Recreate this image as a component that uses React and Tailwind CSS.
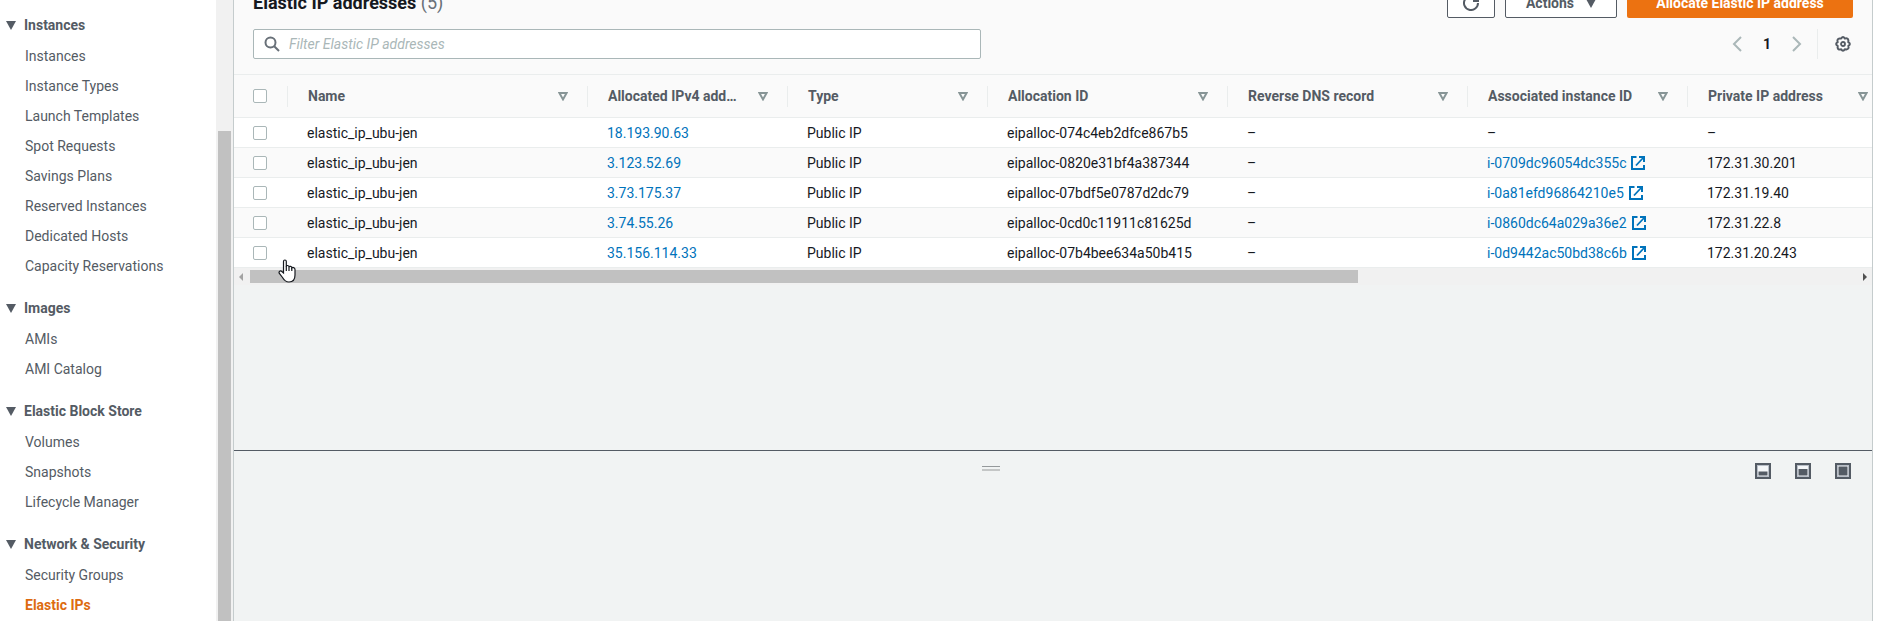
const NAV = [
  { title: 'Instances', items: ['Instances', 'Instance Types', 'Launch Templates', 'Spot Requests', 'Savings Plans', 'Reserved Instances', 'Dedicated Hosts', 'Capacity Reservations'] },
  { title: 'Images', items: ['AMIs', 'AMI Catalog'] },
  { title: 'Elastic Block Store', items: ['Volumes', 'Snapshots', 'Lifecycle Manager'] },
  { title: 'Network & Security', items: ['Security Groups', 'Elastic IPs'] },
];

const COLUMNS = ['Name', 'Allocated IPv4 add…', 'Type', 'Allocation ID', 'Reverse DNS record', 'Associated instance ID', 'Private IP address'];

const ROWS = [
  { ip: '18.193.90.63', id: 'eipalloc-074c4eb2dfce867b5', instance: null, privateIp: '–' },
  { ip: '3.123.52.69', id: 'eipalloc-0820e31bf4a387344', instance: 'i-0709dc96054dc355c', privateIp: '172.31.30.201' },
  { ip: '3.73.175.37', id: 'eipalloc-07bdf5e0787d2dc79', instance: 'i-0a81efd96864210e5', privateIp: '172.31.19.40' },
  { ip: '3.74.55.26', id: 'eipalloc-0cd0c11911c81625d', instance: 'i-0860dc64a029a36e2', privateIp: '172.31.22.8' },
  { ip: '35.156.114.33', id: 'eipalloc-07b4bee634a50b415', instance: 'i-0d9442ac50bd38c6b', privateIp: '172.31.20.243' },
];

function SolidCaret({ className }) {
  return (
    <svg className={className} viewBox="0 0 10 9" aria-hidden="true">
      <path d="M0 0H10L5 9Z" fill="currentColor" />
    </svg>
  );
}

function SortIcon() {
  return (
    <svg className="h-[9px] w-[10px] shrink-0" viewBox="0 0 10 9" aria-hidden="true">
      <path d="M1.4 1H8.6L5 7.4Z" fill="none" stroke="#879596" strokeWidth="2" />
    </svg>
  );
}

function ExternalIcon() {
  return (
    <svg className="size-[14px] shrink-0" viewBox="0 0 14 14" fill="none" stroke="currentColor" strokeWidth="2" aria-hidden="true">
      <path d="M5.5 1H1V13H13V9" />
      <path d="M12 2L5 9.5" strokeWidth="1.8" />
      <path d="M8 0H14V6H12V2H8Z" fill="currentColor" stroke="none" />
    </svg>
  );
}

function PanelIcon({ top }) {
  return (
    <svg className="size-4" viewBox="0 0 16 16" aria-hidden="true">
      <rect x="1" y="1" width="14" height="14" fill="#f4f6f8" stroke="#545b64" strokeWidth="2" />
      <rect x="2.5" y="2.5" width="11" height="11" fill="none" stroke="#b9bfc8" strokeWidth="1" />
      <rect x="3.5" y={top} width="9" height={12.5 - top} fill="#545b64" />
    </svg>
  );
}

function Checkbox({ label }) {
  return (
    <input
      type="checkbox"
      aria-label={label}
      className="block size-[14px] appearance-none rounded-xs border border-[#aab7b8] bg-white"
    />
  );
}

function Sidebar() {
  return (
    <nav aria-label="EC2" className="flex h-full w-[233px] shrink-0 overflow-hidden bg-white text-[#545b64]">
      <div className="flex flex-1 flex-col gap-3 pt-[10px]">
        {NAV.map((section) => (
          <section key={section.title}>
            <button type="button" className="flex h-[30px] items-center gap-2 pl-[6px] font-bold">
              <SolidCaret className="h-[9px] w-[10px]" />
              {section.title}
            </button>
            <ul className="pt-px">
              {section.items.map((item) => (
                <li key={item} className="flex h-[30px] items-center pl-[25px]">
                  <a href="#" className={item === 'Elastic IPs' ? 'font-bold text-[#dd6b10]' : ''}>{item}</a>
                </li>
              ))}
            </ul>
          </section>
        ))}
      </div>
      <div className="w-[17px] bg-[#f1f1f1] px-[2px] pt-[131px]">
        <div className="h-full bg-[#c1c1c1]" />
      </div>
    </nav>
  );
}

function Toolbar() {
  return (
    <header className="bg-[#fafafa] pr-[19px] pl-[19px]">
      <div className="flex h-[18px] items-end justify-between overflow-hidden">
        <h1 className="text-lg leading-[30px] font-bold text-[#16191f]">
          Elastic IP addresses <span className="font-normal text-[#687078]">(5)</span>
        </h1>
        <div className="flex shrink-0 gap-[10px] font-bold text-[#545b64]">
          <button type="button" aria-label="Refresh" className="flex h-[30px] w-12 items-center justify-center rounded-xs border border-[#545b64] bg-white">
            <svg className="size-4" viewBox="0 0 16 16" fill="none" stroke="currentColor" strokeWidth="2" aria-hidden="true">
              <path d="M15 8A7 7 0 1 1 13 3.1" />
              <path d="M15 1V6H10" />
            </svg>
          </button>
          <button type="button" className="flex h-[30px] w-28 items-center justify-center gap-3 rounded-xs border border-[#545b64] bg-white">
            Actions
            <SolidCaret className="h-[9px] w-[10px]" />
          </button>
          <button type="button" className="h-[30px] w-[226px] rounded-xs bg-[#ec7211] text-white">Allocate Elastic IP address</button>
        </div>
      </div>
      <div className="flex items-center justify-between pt-[11px] pb-[15px]">
        <label className="flex h-[30px] w-[728px] items-center gap-[9px] rounded-xs border border-[#aab7b8] bg-white pl-[10px]">
          <svg className="size-4 text-[#687078]" viewBox="0 0 16 16" fill="none" stroke="currentColor" strokeWidth="2" aria-hidden="true">
            <circle cx="6.5" cy="6.5" r="5" />
            <path d="M10.2 10.2L15 15" />
          </svg>
          <input type="search" aria-label="Filter Elastic IP addresses" placeholder="Filter Elastic IP addresses" className="min-w-0 flex-1 outline-none placeholder:text-[#aab7b8] placeholder:italic" />
        </label>
        <div className="flex items-center">
          <button type="button" aria-label="Previous page" className="px-[10px] text-[#aab7b8]">
            <svg className="h-4 w-[10px]" viewBox="0 0 10 16" fill="none" stroke="currentColor" strokeWidth="2" aria-hidden="true"><path d="M9 1L2 8L9 15" /></svg>
          </button>
          <button type="button" className="w-[30px] text-center font-bold text-[#16191f]">1</button>
          <button type="button" aria-label="Next page" className="px-[10px] text-[#aab7b8]">
            <svg className="h-4 w-[10px]" viewBox="0 0 10 16" fill="none" stroke="currentColor" strokeWidth="2" aria-hidden="true"><path d="M1 1L8 8L1 15" /></svg>
          </button>
          <div className="ml-[5px] flex h-[30px] items-center border-l border-[#eaeded] pr-[2px] pl-[17px]">
            <button type="button" aria-label="Preferences" className="text-[#545b64]">
              <svg className="size-4" viewBox="0 0 16 16" fill="none" stroke="currentColor" aria-hidden="true">
                <path strokeWidth="2" strokeLinejoin="round" d="M6.2 2.6Q8 -.4 9.800 2.600Q13.200 1.600 13.400 4.600L13.300 6.200Q16.400 8 13.300 9.800Q14.400 13.200 11.400 13.400L9.800 13.300Q8 16.400 6.200 13.300Q2.800 14.400 2.600 11.400L2.700 9.800Q-.4 8 2.700 6.200Q1.600 2.800 4.600 2.600Z" />
                <circle cx="8" cy="8" r="2" strokeWidth="1.8" />
              </svg>
            </button>
          </div>
        </div>
      </div>
    </header>
  );
}

function AddressTable() {
  return (
    <div className="overflow-hidden">
      <table className="w-full min-w-[1654px] table-fixed border-collapse text-left whitespace-nowrap">
        <colgroup>
          <col className="w-[54px]" />
          <col className="w-[300px]" />
          <col className="w-[200px]" />
          <col className="w-[200px]" />
          <col className="w-[240px]" />
          <col className="w-[240px]" />
          <col className="w-[220px]" />
          <col className="w-[200px]" />
        </colgroup>
        <thead>
          <tr className="h-[43px] border-y border-[#eaeded] bg-[#fafafa] text-[#545b64]">
            <th className="p-0">
              <div className="flex h-[21px] items-center border-r border-[#eaeded] pl-[19px]">
                <Checkbox label="Select all addresses" />
              </div>
            </th>
            {COLUMNS.map((name) => (
              <th key={name} className="group p-0">
                <div className="flex h-[21px] items-center justify-between border-r border-[#eaeded] pr-[19px] pl-5 group-last:border-r-0 group-last:pr-5">
                  {name}
                  <SortIcon />
                </div>
              </th>
            ))}
          </tr>
        </thead>
        <tbody>
          {ROWS.map((row) => (
            <tr key={row.id} className="h-[30px] border-b border-[#eaeded] bg-white text-[#16191f] even:bg-[#fafafa]">
              <td className="py-0 pr-0 pl-[19px]"><Checkbox label={'Select ' + row.id} /></td>
              <td className="py-0 pl-[19px]">elastic_ip_ubu-jen</td>
              <td className="py-0 pl-[19px]"><a href="#" className="text-[#0073bb]">{row.ip}</a></td>
              <td className="py-0 pl-[19px]">Public IP</td>
              <td className="py-0 pl-[19px]">{row.id}</td>
              <td className="py-0 pl-[19px]">–</td>
              <td className="py-0 pl-[19px]">
                {row.instance ? (
                  <a href="#" className="flex items-center gap-[5px] text-[#0073bb]">{row.instance}<ExternalIcon /></a>
                ) : '–'}
              </td>
              <td className="py-0 pl-[19px]">{row.privateIp}</td>
            </tr>
          ))}
        </tbody>
      </table>
      <div className="flex h-[17px] items-center justify-between bg-[#f1f1f1] pr-[5px] pl-[5px]">
        <svg className="h-2 w-1" viewBox="0 0 4 8" aria-hidden="true"><path d="M4 0V8L0 4Z" fill="#a3a3a3" /></svg>
        <div className="flex-1 pl-[7px]"><div className="h-[13px] w-[68.7%] bg-[#c1c1c1]" /></div>
        <svg className="h-2 w-1" viewBox="0 0 4 8" aria-hidden="true"><path d="M0 0V8L4 4Z" fill="#505050" /></svg>
      </div>
    </div>
  );
}

function SplitPanel() {
  return (
    <section aria-label="Details" className="h-[171px] shrink-0 border-t border-[#545b64] pt-3 pr-[21px]">
      <div className="flex items-start">
        <div className="flex flex-1 justify-center pt-[3px]">
          <button type="button" aria-label="Resize panel" className="h-[5px] w-[18px] border-t border-b-2 border-t-[#95999b] border-b-[#c4c6c6]" />
        </div>
        <div className="flex gap-6 pl-2">
          <button type="button" aria-label="Small panel"><PanelIcon top={8.5} /></button>
          <button type="button" aria-label="Medium panel"><PanelIcon top={6} /></button>
          <button type="button" aria-label="Full panel"><PanelIcon top={3.5} /></button>
        </div>
      </div>
    </section>
  );
}

export default function App() {
  return (
    <div className="relative flex h-screen overflow-hidden bg-white pr-[17px] font-[Roboto,sans-serif] text-sm">
      <Sidebar />
      <main className="flex min-w-0 flex-1 flex-col border-x border-[#c5cccd] bg-[#f1f3f3]">
        <div className="min-h-0 flex-1">
          <Toolbar />
          <AddressTable />
        </div>
        <SplitPanel />
      </main>
      <svg className="absolute top-[259px] left-[278px] h-6 w-[18px]" viewBox="0 0 18 24" aria-hidden="true">
        <path d="M5.5 14V2.5C5.5 .5 8.3 .5 8.3 2.5V7.5C8.6 6 11 6.200 11 8C11.500 6.800 13.800 7.200 13.800 9C14.500 8 17 8.500 17 10.500V16C17 20 15 23 11 23C7.500 23 6.200 21.500 4.500 18.500L1.200 14.200C.500 12.500 2.500 11.500 3.500 12.300Z" fill="#fff" stroke="#16191f" strokeWidth="1.2" />
        <path d="M8.300 7V12M11 8V12M13.800 9V12" stroke="#16191f" strokeWidth="1.200" />
      </svg>
    </div>
  );
}
